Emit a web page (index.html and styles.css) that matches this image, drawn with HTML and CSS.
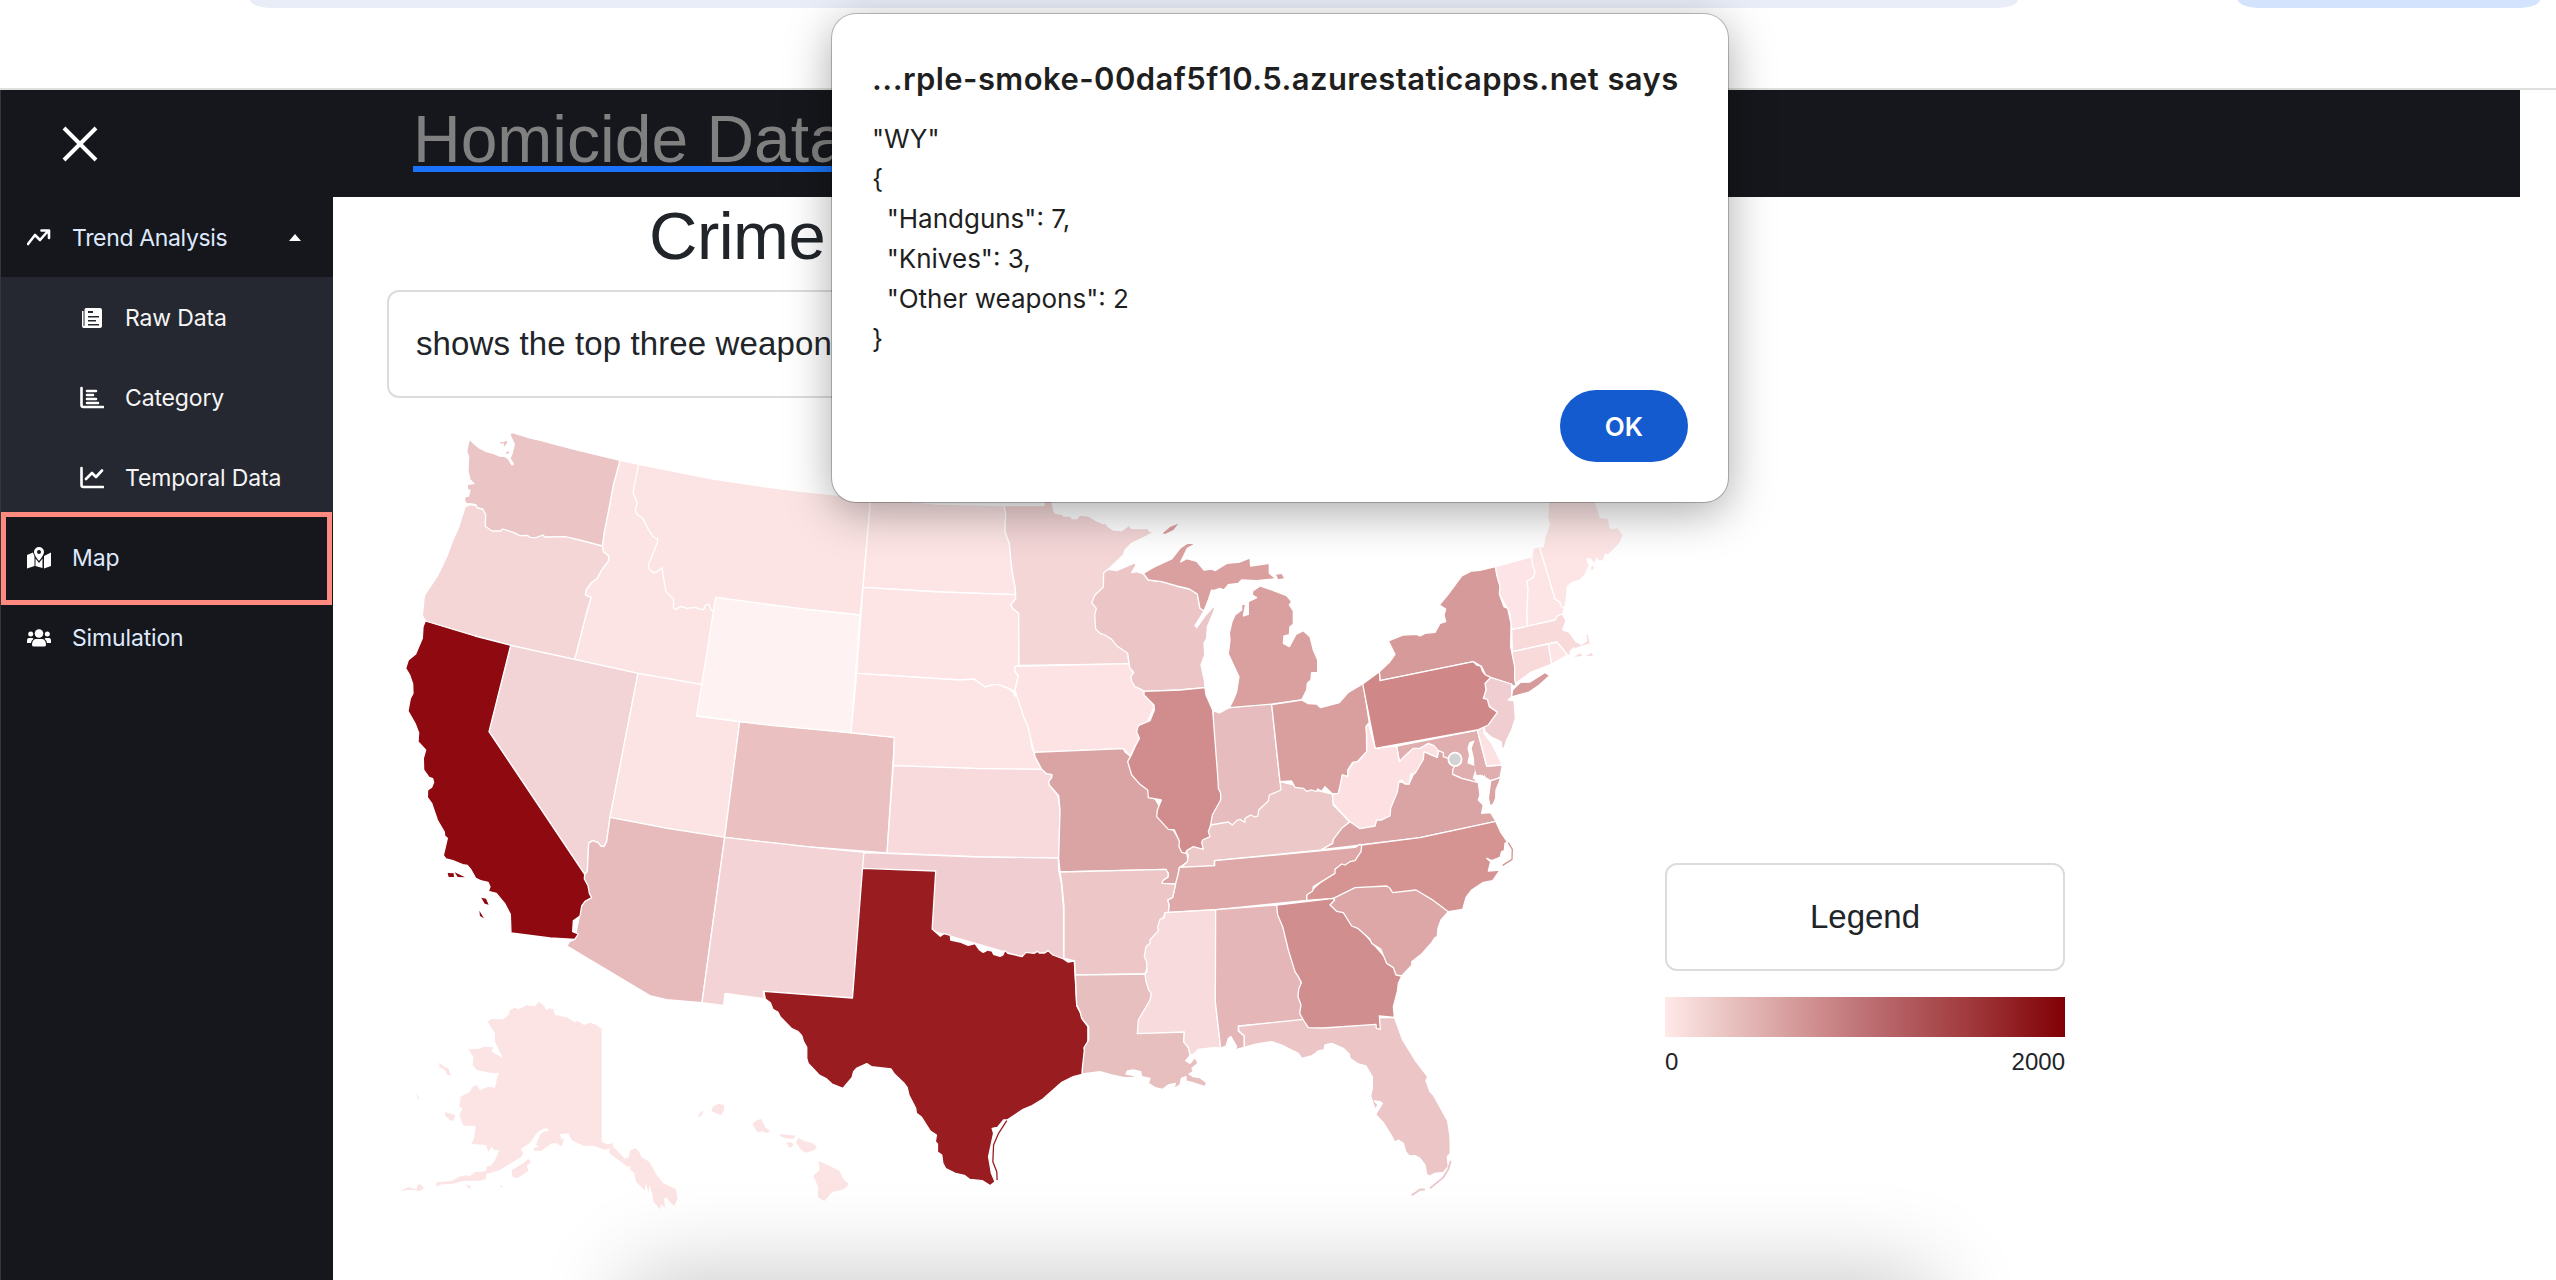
FILE: index.html
```
<!DOCTYPE html>
<html lang="en">
<head>
<meta charset="utf-8">
<title>Homicide Data</title>
<link rel="stylesheet" href="styles.css">
</head>
<body>
<div class="window">
  <div class="browser-bar"><div class="omnibox"></div><div class="profile-chip"></div></div>
  <header class="topbar">
    <svg class="close" viewBox="0 0 36 36"><path d="M2 2L34 34M34 2L2 34"/></svg>
    <h1 class="brand">Homicide Data</h1>
  </header>
  <div class="body">
    <nav class="sidebar">
      <a class="item"><svg class="icon" viewBox="0 0 24 24"><path class="line" d="M1 18L8 9l5 5L21 5M14.500 4.500h7.500v7.500"/></svg><span class="tight">Trend Analysis</span><svg class="caret" viewBox="0 0 12 7"><path d="M0 7L6 0l6 7z"/></svg></a>
      <div class="submenu">
        <a class="item sub"><svg class="icon" viewBox="0 0 24 24"><path fill-rule="evenodd" d="M6 2h14q2 0 2 2v16q0 2-2 2H4q-2 0-2-2V5h1.500v15h1V4q0-2 1.500-2zM8 5v2h5V5zM8 10v1.500h11V10zM8 14v1.500h8V14zM8 18v1.500h11V18z"/></svg><span>Raw Data</span></a>
        <a class="item sub"><svg class="icon" viewBox="0 0 24 24"><path class="line" d="M1.500 2v17q0 2 2 2H23M7 5h9M7 9h6M7 13h9M7 17h11"/></svg><span>Category</span></a>
        <a class="item sub"><svg class="icon" viewBox="0 0 24 24"><path class="line" d="M1.500 2v17q0 2 2 2H23M6 13l6-6 4 4 6-6.500"/></svg><span>Temporal Data</span></a>
      </div>
      <a class="item active"><svg class="icon" viewBox="0 0 24 24"><path fill-rule="evenodd" d="M12 1a5 5 0 0 1 5 5c0 3-5 9-5 9S7 9 7 6a5 5 0 0 1 5-5zm0 3a2 2 0 1 0 0 4 2 2 0 0 0 0-4zM0 9l6-2.500 1.500 4V20L0 22.500zM8.500 12.500L12 17l3.500-4.500v9.500L8.500 20zM17 10l7-3.500V20l-7 2.500z"/></svg><span>Map</span></a>
      <a class="item"><svg class="icon" viewBox="0 0 24 24"><circle cx="12" cy="7.500" r="4.300"/><circle cx="3.700" cy="8" r="2.500"/><circle cx="20.300" cy="8" r="2.500"/><path d="M8.500 13h7q3.500 1 3.500 6 0 1.500-2 1.500H7q-2 0-2-1.500 0-5 3.500-6zM2 12h3.500l1 1Q4 14.500 4 17H0v-2q0-3 2-3zM22 12h-3.500l-1 1Q20 14.500 20 17h4v-2q0-3-2-3z"/></svg><span>Simulation</span></a>
    </nav>
    <main class="content">
      <h2 class="heading">Crime</h2>
      <div class="card note">shows the top three weapon</div>
      <div class="chart">
        <svg class="map" viewBox="387 410 1248 840">
          <g transform="translate(380 410) scale(.33333)">
            <path fill="#fce4e4" d="M720 151L776 163 1007 562 1001 606 967 824 772 790 584 748 622 600 633 562 616 555 618 540 636 516 650 507 666 478 686 452 686 438 670 425 667 408 672 370 686 300 700 225z"/>
            <path fill="#f4d6d7" d="M255 291L270 284 287 286 293 294 308 297 667 408 670 425 686 438 686 452 666 478 650 507 636 516 618 540 616 555 633 562 622 600 584 748 392 706 285 678 136 633 127 617 133 557 175 493 200 440 219 389 235 355z"/>
            <path fill="#ebc4c6" d="M268 87L282 101 298 114 320 125 342 131 358 138 374 139 384 145 396 165 400 162 390 145 397 128 403 103 390 75 395 67 440 81 484 92 580 117 720 151 700 225 686 300 672 370 667 408 610 393 556 380 494 381 489 375 468 383 450 382 442 376 420 377 400 367 368 357 362 363 336 363 316 349 317 314 308 297 293 294 287 284 270 281 260 282 253 272 256 259 265 259 270 241 262 238 262 223 282 221 270 209 264 183 266 140 260 124zM357 91L368 95 382 89 383 100 372 115 370 102 361 104zM376 125L387 121 390 130 378 136z"/>
            <path fill="#fce4e4" d="M776 163L900 188 1000 207 1150 230 1260 244 1380 256 1472 262 1449 532 1440 615 1260 596 1007 562 1001 606 992 597 986 582 976 586 973 597 963 599 945 592 920 595 903 589 887 599 880 592 881 568 858 545 850 500 846 473 830 486 820 488 807 476 805 465 832 398 833 387 820 381 805 358 787 323 772 314 766 300 772 280 759 247z"/>
          </g>
          <g transform="translate(380 680) scale(.33333)">
            <path fill="#f3d4d6" d="M392 -104L774 -20 690 412 680 485 672 500 662 498 655 488 638 482 626 490 622 575 614 583 327 155z"/>
            <path fill="#fce4e4" d="M774 -20L967 14 950 108 1079 125 1034 472 862 445 690 412z"/>
            <path fill="#e7babc" d="M690 412L862 445 1034 472 966 968 860 959 812 948 561 798 568 785 584 778 600 700 613 597 614 583 622 575 626 490 638 482 655 488 662 498 672 500 680 485z"/>
            <path fill="#8f0a10" d="M136 -177L285 -132 392 -104 327 155 614 583 613 597 624 617 628 640 635 653 615 664 605 678 600 708 580 722 578 755 595 762 584 778 510 774 393 759 391 703 375 672 349 640 325 634 330 620 324 607 305 603 287 595 272 568 262 556 248 554 222 543 198 537 190 526 202 475 194 468 193 456 172 420 155 370 142 352 143 330 155 322 161 307 158 296 147 292 131 270 130 235 137 210 114 185 116 158 105 130 84 93 91 55 99 40 98 12 89 -15 77 -35 85 -60 107 -78 127 -125 129 -160z"/>
            <path class="island" fill="#8f0a10" d="M203 579L221 580 222 591 206 591zM224 577L255 592 233 591zM304 653L318 656 326 674 314 671zM298 692L312 715 300 708z"/>
            <path fill="#eac0c1" d="M1079 125L1544 172 1521 519 1280 500 1034 472z"/>
            <path fill="#f3d3d5" d="M1034 472L1280 500 1453 517 1418 955 1150 934 1153 956 1035 940 1031 976 966 968z"/>
            <path fill="#fef3f2" d="M1007 -248L1260 -214 1440 -195 1413 158 1180 137 950 108z"/>
          </g>
          <g transform="translate(780 480) scale(.33333)">
            <path fill="#fde5e5" d="M272 55L470 72 672 77 677 100 675 155 688 190 695 265 706 325 706 344 480 336 249 322z"/>
            <path fill="#fde5e5" d="M249 322L480 336 706 344 707 357 693 373 697 384 716 400 716 556 706 559 704 573 715 588 704 635 685 625 655 614 640 614 615 621 582 597 540 600 230 580z"/>
            <path fill="#fde5e5" d="M230 580L540 600 582 597 615 621 640 614 655 614 685 625 700 637 705 648 714 648 718 670 733 715 744 740 752 775 755 800 765 830 785 868 600 866 340 857 343 772 213 758z"/>
            <path fill="#f8dadc" d="M340 857L600 866 785 868 800 881 816 884 815 893 806 905 808 915 834 947 840 990 836 1135 600 1131 321 1119z"/>
          </g>
          <g transform="translate(700 840) scale(.35714 .33333)">
            <path fill="#f0cdd0" d="M459 38L520 40 780 51 1003 54 1005 95 1012 130 1018 205 1018 362 975 340 900 350 640 270 640 98 455 85z"/>
            <path fill="#981c20" d="M455 85L660 93 650 267 673 289 683 281 701 286 702 300 728 306 751 316 770 311 783 330 793 337 806 330 818 333 822 343 840 349 848 345 854 331 862 340 902 350 913 337 935 340 945 334 950 339 965 339 975 332 988 345 1018 357 1030 366 1048 363 1055 498 1067 522 1071 538 1086 560 1086 608 1076 625 1079 640 1071 688 1070 703 1045 710 1013 727 960 777 930 797 905 808 860 840 850 840 833 862 818 865 822 880 808 950 816 1000 826 1025 812 1037 790 1022 755 1018 740 1006 715 1000 688 986 680 970 677 945 665 936 665 912 659 905 662 885 645 873 620 831 606 820 604 805 585 765 580 742 570 728 545 703 535 687 480 680 467 671 438 685 430 695 426 712 400 745 370 732 352 715 335 706 303 670 299 655 299 622 290 605 285 587 275 575 257 566 225 531 218 516 204 508 197 488 183 477 179 454 427 474z"/>
            <path class="thin dark" d="M859 842L836 880 822 915 820 965 831 995 832 1020"/>
          </g>
          <g transform="translate(980 480) scale(.33333)">
            <path fill="#f4d6d7" d="M72 77L192 77 192 60 215 60 222 95 230 101 248 103 250 108 272 108 276 116 290 116 300 105 325 108 350 123 372 132 378 127 382 138 400 150 425 152 447 136 455 146 505 146 510 155 530 152 500 168 455 190 435 210 430 225 385 268 400 400 443 520 447 552 117 556 116 400 97 384 93 373 107 357 106 325 95 265 88 190 75 155 77 100z"/>
            <path fill="#fde3e3" d="M106 559L447 551 451 565 523 680 478 775 450 828 430 806 163 817 152 775 144 740 133 715 118 670 105 630 115 588 104 573z"/>
            <path fill="#dba4a4" d="M163 817L430 806 436 817 450 828 620 1118 625 1145 598 1163 590 1213 545 1213 547 1203 565 1190 565 1178 555 1168 240 1176 236 1135 240 990 236 947 208 915 206 905 215 893 216 884 200 881 185 868 165 830z"/>
            <path fill="#edc8c9" d="M620 1118L640 1000 900 905 1057 942 1060 975 1108 1025 1080 1055 1060 1080 1058 1090 1025 1110 703 1142 703 1158 603 1162 622 1145 625 1125z"/>
            <path fill="#e6bcbe" d="M700 692L718 699 748 683 875 670 900 905 903 930 868 945 865 963 836 990 834 1008 825 1011 812 1005 795 1015 795 1027 780 1018 770 1022 757 1035 745 1026 692 1035 690 800z"/>
            <path fill="#ecc5c6" d="M371 278L385 268 410 272 465 248 468 256 455 278 470 275 490 282 505 300 545 305 590 318 628 327 652 342 660 385 672 393 645 437 650 443 675 408 704 376 703 390 682 440 680 475 672 490 674 525 663 555 673 600 675 623 600 630 492 634 485 629 465 620 455 605 453 590 461 577 449 562 443 520 410 497 395 478 375 465 360 460 347 447 344 405 349 385 335 368 345 345 370 322z"/>
            <path fill="#d18d8d" d="M492 634L600 630 675 623 678 645 698 690 714 900 715 925 722 940 722 960 697 1005 692 1035 685 1055 690 1070 668 1080 665 1088 670 1108 640 1100 620 1112 617 1120 605 1117 597 1100 598 1083 583 1050 565 1048 530 1010 532 990 544 960 505 953 503 930 480 913 455 885 443 845 455 823 465 800 478 775 470 755 475 737 510 722 523 690 522 675 492 645z"/>
            <path fill="#daa09f" d="M490 280L520 262 575 237 600 205 622 190 642 190 640 195 622 205 602 246 620 236 650 244 672 270 695 267 705 272 740 250 780 246 810 234 812 258 868 250 868 280 888 296 830 302 785 300 775 310 745 314 732 330 720 325 700 332 695 330 685 360 672 393 660 385 652 342 628 327 590 318 545 305 505 300zM840 318L870 328 920 347 935 365 928 375 940 393 940 433 930 440 928 465 912 468 910 490 928 500 948 463 970 452 990 470 1000 510 1013 540 1013 578 995 578 993 600 982 610 980 630 965 660 878 672 748 683 760 660 770 635 777 590 745 522 750 480 748 460 756 425 765 405 785 390 785 373 797 373 790 408 805 403 805 365 830 353 817 345 818 333z"/>
            <path class="island" fill="#daa09f" d="M548 160L570 141 595 131 580 150 555 162zM888 284L905 282 912 295 895 298z"/>
            <path fill="#d99f9e" d="M875 674L965 660 985 671 1010 672 1022 683 1078 668 1105 637 1150 610 1168 730 1159 740 1160 815 1130 847 1118 847 1103 870 1105 890 1087 885 1083 915 1075 940 1057 942 1035 920 1025 934 1013 927 1010 935 995 930 980 934 970 925 945 922 935 903 900 905z"/>
          </g>
          <g transform="translate(1280 480) scale(.33333)">
            <path fill="#fde5e5" d="M778 200L790 200 795 170 808 135 803 110 807 60 945 60 960 112 985 115 990 140 997 147 1012 142 1030 165 1020 190 985 225 975 223 970 243 955 243 950 235 943 252 930 235 920 238 928 255 915 285 900 300 875 308 862 320 858 365 853 385 840 378 840 367 825 358z"/>
            <path class="island" fill="#fde5e5" d="M932 262L938 257 943 264 935 272z"/>
            <path fill="#fde5e6" d="M755 230L760 204 778 200 825 358 840 367 842 378 853 385 848 402 825 420 742 440 735 300z"/>
            <path fill="#fde5e7" d="M646 260L755 230 757 255 765 275 760 293 740 303 744 325 740 405 742 440 695 449 690 400 658 342z"/>
            <path fill="#f8dadb" d="M695 449L825 420 832 408 848 402 858 423 848 450 868 457 888 485 905 493 920 483 918 467 902 459 925 463 931 492 900 501 888 505 880 520 882 503 870 515 872 525 862 525 830 486 697 515z"/>
            <path class="island" fill="#f8dadb" d="M883 531L900 520 907 527zM918 527L935 519 939 528z"/>
            <path fill="#f8dadb" d="M697 515L805 492 815 552 750 578 708 610 700 600z"/>
            <path fill="#fde4e5" d="M805 492L830 486 845 502 862 525 815 552z"/>
            <path fill="#f0cdd0" d="M632 590L695 612 695 650 685 660 702 662 706 715 695 750 680 780 673 803 666 806 663 785 635 772 615 755 612 742 652 697 630 680 610 655 618 630 615 610z"/>
            <path fill="#d79a9a" d="M646 260L650 285 660 320 658 342 672 380 683 385 693 430 692 500 704 560 704 600 708 615 698 618 695 612 632 592 617 585 605 560 580 545 300 602 298 575 328 547 345 523 325 483 370 465 410 463 420 468 435 460 465 457 480 430 497 425 492 405 497 387 478 375 505 342 545 288 575 273 600 271z"/>
            <path class="island" fill="#d79a9a" d="M697 648L700 630 722 609 750 608 795 580 806 587 775 615 745 635z"/>
            <path fill="#e1aeaf" d="M350 798L592 750 620 858 667 855 660 893 632 902 600 885 590 908 545 895 518 883 480 850 440 800 400 815 358 845z"/>
            <path fill="#dba4a4" d="M125 1109L158 1090 160 1078 185 1045 210 1025 357 905 387 912 432 815 472 832 475 812 490 818 490 830 505 835 525 855 518 870 518 883 545 895 595 908 600 945 595 960 610 975 605 1000 632 998 648 1024 420 1073 245 1095zM632 903L662 892 658 905 648 930 647 955 640 972 630 978 625 955z"/>
            <path fill="#fde0e1" d="M265 730L286 805 350 798 358 845 375 827 400 805 420 805 445 790 462 797 475 812 472 832 432 815 430 838 405 880 393 882 387 912 375 912 365 900 357 905 352 935 332 985 330 1008 320 1012 305 1020 290 1020 285 1038 240 1046 210 1025 172 985 160 970 157 942 175 940 187 885 203 890 205 870 220 847 235 844 260 815 260 760 258 740z"/>
            <path fill="#fde2e3" d="M592 750L605 738 612 740 612 760 635 790 667 855 620 858z"/>
            <path fill="#cf8887" d="M248 612L298 575 300 602 580 545 590 555 602 558 608 575 617 585 632 592 615 610 618 630 610 655 622 658 628 680 652 697 625 735 592 750 286 805z"/>
            <path class="island" fill="#fff" d="M584 781L568 787 562 805 567 825 562 850 583 858 585 872 578 895 598 912 605 945 595 960 610 975 605 1000 632 995 625 950 628 910 612 883 612 905 608 885 590 885 583 860 582 835 575 805z"/>
            <circle cx="525" cy="838" r="20" class="capital"/>
          </g>
          <g transform="translate(1040 820) scale(.33333)">
            <path fill="#d59391" d="M963 75L1140 53 1367 4 1383 38 1402 66 1395 70 1393 92 1385 95 1380 112 1355 122 1340 115 1352 125 1345 153 1380 150 1358 182 1330 187 1295 210 1278 232 1268 268 1225 275 1060 300 880 235 800 241 800 225z"/>
            <path class="thin rose" d="M1405 68L1417 88 1416 118 1388 136"/>
            <path fill="#dea8a8" d="M418 142L524 137 524 122 845 92 945 82 960 73 965 77 963 95 945 122 930 125 915 135 905 132 885 148 885 160 845 185 820 200 818 213 800 225 800 241 530 269 385 277 387 255 383 240 398 232 407 190 415 160z"/>
            <path fill="#edc7c8" d="M60 156L378 148 385 163 383 172 370 180 366 190 407 192 398 232 383 240 387 255 385 277 375 278 315 462 106 465 104 423 72 415 72 260 65 185z"/>
            <path fill="#e8bfbf" d="M106 465L315 462 400 550 433 636 431 665 445 683 452 705 437 722 450 730 465 712 474 730 456 745 460 755 447 762 460 770 480 773 500 788 495 800 455 787 438 783 438 770 424 775 420 795 402 806 406 790 385 795 368 808 345 803 325 790 330 775 305 770 302 755 280 750 262 753 258 762 290 768 280 773 250 772 215 765 180 755 127 762 127 745 133 690 132 683 146 660 146 620 125 595 120 575 110 555z"/>
            <path fill="#f8dbdd" d="M375 278L530 269 526 545 542 684 520 683 475 688 460 703 450 705 445 683 431 665 433 636 292 641 295 600 330 540 334 520 326 510 318 485 315 462 321 455 320 425 313 410 318 380 330 370 330 360 355 332 353 320 360 298 373 292z"/>
            <path fill="#e5b6b8" d="M527 269L710 255 784 488 790 600 595 618 595 633 613 648 613 682 582 690 590 680 573 650 565 655 558 678 542 684 526 545z"/>
            <path fill="#ecc5c7" d="M595 619L790 598 1063 592 1088 660 1125 720 1163 770 1158 782 1170 815 1180 825 1223 903 1230 950 1231 1000 1222 1010 1225 1040 1210 1057 1185 1060 1168 1068 1160 1063 1155 1035 1140 1015 1125 1007 1108 1008 1097 995 1090 970 1075 960 1065 967 1055 948 1030 908 1007 883 1027 850 1020 845 1003 843 1015 855 1005 868 992 828 997 805 997 770 978 738 955 732 930 715 928 703 910 685 875 670 855 675 852 690 835 693 815 708 785 715 775 700 725 675 695 665 650 672 613 682 613 648 597 633z"/>
            <path class="thin pink" d="M1232 1022L1225 1048 1210 1072 1170 1105M1155 1109L1142 1108 1115 1126"/>
            <path fill="#d18e8e" d="M710 255L880 235 1085 469 1075 490 1072 515 1060 560 1063 592 1018 588 1021 628 1009 625 1008 613 850 624 805 623 790 600 779 580 783 555 774 530 776 508 784 488 775 470 765 455 745 390 728 320 713 285z"/>
            <path fill="#dda7a7" d="M880 235L945 203 1040 198 1050 205 1058 218 1128 210 1175 238 1225 275 1203 300 1194 325 1192 350 1185 353 1175 368 1145 402 1115 425 1116 435 1085 468 1068 465 1060 443 1040 430 1022 387 995 370 990 358 955 326 935 318 910 278 890 274 870 255 884 240z"/>
          </g>
          <g class="outlying" transform="translate(380 980) scale(.33333)">
            <path d="M477 65L492 77 500 92 506 85 520 88 525 105 560 112 585 127 593 123 612 135 630 128 648 134 665 147 665 486 680 493 698 490 700 500 735 537 747 530 750 512 767 504 780 520 783 530 808 545 830 585 850 610 888 628 893 655 883 678 872 668 860 653 852 655 855 683 843 672 840 688 820 665 818 645 808 615 806 635 797 610 795 632 768 605 763 580 750 568 753 558 743 560 688 520 690 505 675 509 640 497 610 497 575 480 565 460 540 463 545 480 552 475 545 500 530 490 515 490 485 512 462 512 462 505 475 500 468 493 480 465 490 455 508 452 500 445 490 446 472 457 450 488 422 508 430 520 422 532 400 545 360 570 318 582 318 597 300 602 250 603 215 612 185 613 168 620 170 607 215 603 237 590 257 586 270 589 285 577 318 573 320 560 335 555 348 535 358 510 342 510 335 500 325 515 318 495 275 492 283 470 287 437 250 437 238 405 248 385 238 380 242 350 270 335 278 320 290 315 300 330 325 320 345 323 352 290 358 280 330 278 290 270 278 255 280 230 265 208 300 206 310 200 340 202 335 215 368 233 345 185 345 160 323 125 335 117 370 118 385 105 390 90 405 83 415 88 440 76 465 79z"/>
            <path d="M178 248L195 262 205 265 213 287 202 284 192 268 178 262zM108 340L119 357 114 358zM195 396L226 405 220 422 210 421 196 408zM395 570L430 550 445 537 453 545 440 558 446 572 412 595 397 590zM58 633L85 622 110 628 112 614 122 613 132 625 120 633 92 629zM255 613L275 620 268 626zM360 620L365 615 368 623z"/>
            <path d="M953 410L962 395 972 394 962 409zM998 380L1015 371 1032 375 1033 390 1023 406 995 394zM1117 433L1125 424 1143 416 1157 443 1170 453 1160 459 1148 454 1132 457zM1198 467L1204 462 1248 467 1240 476 1215 475zM1218 487L1238 488 1240 498 1228 504zM1255 474L1275 484 1300 490 1311 502 1300 512 1275 518 1262 508 1248 488zM1316 543L1348 557 1378 572 1392 600 1407 612 1392 628 1357 636 1333 663 1314 652 1314 620 1300 587 1318 570z"/>
          </g>
        </svg>
        <aside class="legend">
          <div class="card legend-title">Legend</div>
          <div class="ramp"></div>
          <div class="scale"><span>0</span><span>2000</span></div>
        </aside>
      </div>
    </main>
  </div>
  <div class="dock-shadow"></div>
  <div class="dialog" role="alertdialog">
    <div class="dialog-title">...rple-smoke-00daf5f10.5.azurestaticapps.net says</div>
    <pre class="dialog-text">"WY"
{
  "Handguns": 7,
  "Knives": 3,
  "Other weapons": 2
}</pre>
    <button class="ok">OK</button>
  </div>
</div>
</body>
</html>
```
FILE: styles.css
```
* { box-sizing: border-box; }
body { margin: 0; background: #fff; font-family: "Liberation Sans", Arial, sans-serif; color: #212529; }
.window { position: relative; width: 2556px; height: 1280px; overflow: hidden; display: flex; flex-direction: column; }
.browser-bar { height: 90px; flex: none; border-bottom: 2px solid #dde0dd; display: flex; padding-left: 250px; }
.omnibox { width: 1768px; height: 8px; background: #e9edf8; border-radius: 0 0 24px 24px / 0 0 8px 8px; }
.profile-chip { width: 302px; height: 8px; margin-left: 220px; background: #d3e3fd; border-radius: 0 0 24px 24px / 0 0 8px 8px; }
.topbar { width: 2520px; height: 107px; flex: none; background: #15171c; border-left: 1px solid #34363b; display: flex; }
.close { width: 36px; height: 36px; margin: 36px 0 0 61px; fill: none; stroke: #fff; stroke-width: 4; }
.brand { margin: 13px 0 0 315px; height: 69px; font-size: 66px; line-height: 72px; font-weight: 400; color: #808080; border-bottom: 6px solid #1a73f8; white-space: nowrap; }
.body { flex: 1; display: flex; min-height: 0; }
.sidebar { width: 333px; flex: none; background: #15171c; border-left: 1px solid #34363b; font-family: Inter, sans-serif; font-size: 23px; }
.item { display: flex; align-items: center; height: 80px; padding: 1px 0 0 26px; color: #dfe9fc; }
.item span { margin-left: 21px; white-space: nowrap; letter-spacing: -.15px; }
.item .tight { letter-spacing: -.35px; }
.icon { width: 24px; height: 24px; fill: #fff; }
.line { fill: none; stroke: #fff; stroke-width: 2.6; stroke-linecap: round; stroke-linejoin: round; }
.caret { width: 12px; height: 7px; margin-left: auto; margin-right: 32px; fill: #fff; }
.submenu { background: #252831; }
.item.sub { padding-left: 79px; color: #f5f5f5; }
.item.active { height: 93px; margin: -5px 1px -8px 0; padding: 0 0 2px 21px; border: 5px solid #ff8a80; position: relative; background: #15171c; }
.content { flex: 1; padding-left: 54px; }
.heading { margin: 0 0 0 262px; height: 93px; font-size: 67px; line-height: 78px; font-weight: 400; letter-spacing: -.5px; }
.card { border: 2px solid #dcdcdc; border-radius: 12px; display: flex; align-items: center; font-size: 33px; background: #fff; }
.note { width: 1248px; height: 108px; padding-left: 27px; letter-spacing: .12px; }
.chart { display: flex; gap: 30px; margin-top: 12px; }
.map { width: 1248px; height: 840px; flex: none; }
.map path { stroke: #fff; stroke-width: 1.3px; stroke-linejoin: round; vector-effect: non-scaling-stroke; }
.map .island, .map .outlying path { stroke: none; }
.map .thin { fill: none; }
.map .dark { stroke: #981c20; }
.map .rose { stroke: #d59391; }
.map .pink { stroke: #ecc5c7; stroke-width: 1.8px; }
.map .capital { fill: #d3d3d3; stroke: #fff; stroke-width: 5; }
.outlying { fill: #fce4e4; }
.legend { width: 400px; padding-top: 453px; }
.legend-title { height: 108px; justify-content: center; }
.ramp { height: 40px; margin-top: 26px; background: linear-gradient(90deg, #ffe9e9 0%, #eccac7 13%, #d08f90 37%, #bb6c70 52%, #a03a3d 76%, #800005 100%); }
.scale { display: flex; justify-content: space-between; margin-top: 11px; font-size: 24px; line-height: 28px; }
.dock-shadow { position: absolute; left: 640px; top: 1284px; width: 1280px; height: 100px; box-shadow: 0 0 90px 10px rgba(0,0,0,.22); }
.dialog { position: absolute; left: 832px; top: 14px; width: 896px; height: 488px; padding: 43px 40px 40px 40px; background: #fff; border-radius: 24px; box-shadow: 0 0 0 1px rgba(0,0,0,.24), 0 10px 46px rgba(0,0,0,.34); font-family: Inter, sans-serif; color: #1f1f1f; display: flex; flex-direction: column; }
.dialog-title { font-size: 31px; line-height: 44px; font-weight: 600; white-space: nowrap; letter-spacing: .43px; }
.dialog-text { margin: 18px 0 0; font: 400 26px/40px Inter, sans-serif; }
.ok { width: 128px; height: 72px; margin: auto 0 0 auto; border: 0; border-radius: 36px; background: #155bd0; color: #fff; font: 600 26px Inter, sans-serif; }
```
